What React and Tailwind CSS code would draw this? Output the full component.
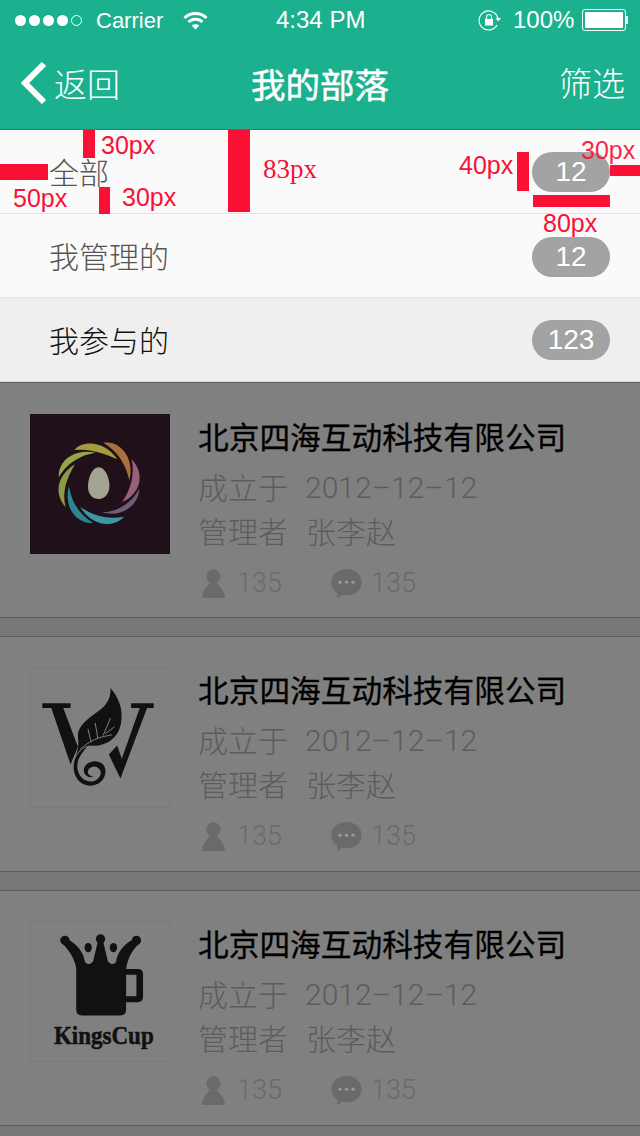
const cjk = { fontFamily: '"Noto Sans CJK SC", sans-serif' };

function StatusBar() {
  return (
    <div className="flex h-10 items-center text-[22px] text-white font-['Liberation_Sans',sans-serif]">
      <div className="ml-[15px] flex gap-[3px]">
        <div className="h-[11px] w-[11px] rounded-full bg-white" />
        <div className="h-[11px] w-[11px] rounded-full bg-white" />
        <div className="h-[11px] w-[11px] rounded-full bg-white" />
        <div className="h-[11px] w-[11px] rounded-full bg-white" />
        <div className="h-[11px] w-[11px] rounded-full border border-white" />
      </div>
      <span className="ml-[14px] w-[67px]">Carrier</span>
      <svg className="ml-5" width="25" height="19" viewBox="0 0 25 19" fill="none" stroke="#fff" strokeWidth="3">
        <path d="M1.5 7 C7.5 1 17.5 1 23.5 7" />
        <path d="M5.5 11 C9.5 7.3 15.5 7.3 19.5 11" />
        <path d="M12.5 18.5 L8.8 14.4 C10.8 12.7 14.2 12.7 16.2 14.4 Z" fill="#fff" stroke="none" />
      </svg>
      <span className="ml-[68px] w-[90px] whitespace-nowrap text-2xl">4:34 PM</span>
      <svg className="ml-[112px]" width="23" height="23" viewBox="0 0 23 23" fill="none" stroke="#fff" strokeWidth="1.2">
        <path d="M19 16 A9.5 9.5 0 1 1 19.8 9" />
        <path d="M17.5 9 L23 9 L20 12.5 Z" fill="#fff" stroke="none" />
        <rect x="7" y="10" width="8" height="6.5" fill="#fff" stroke="none" />
        <path d="M8.5 10 V8 A2.5 2.5 0 0 1 13.5 8 V10" />
      </svg>
      <span className="ml-3 w-[62px] text-2xl">100%</span>
      <div className="ml-[7px] flex items-center">
        <div className="h-[22px] w-11 rounded-[3px] border border-white p-0.5">
          <div className="h-full w-full rounded-[1px] bg-white" />
        </div>
        <div className="h-2 w-0.5 bg-white" />
      </div>
    </div>
  );
}

function NavBar() {
  return (
    <div className="flex h-[89px] items-center justify-between pb-[3px] text-white" style={cjk}>
      <div className="flex w-[130px] items-center">
        <svg className="ml-5" width="27" height="42" viewBox="0 0 27 42" fill="none" stroke="#fff" strokeWidth="6">
          <polyline points="24,2 5,21 24,40" />
        </svg>
        <span className="ml-[7px] text-[33px] font-light leading-none">返回</span>
      </div>
      <span className="text-[34.5px] font-normal leading-none [-webkit-text-stroke:0.5px_#fff]">我的部落</span>
      <div className="w-[130px] pr-[15px] text-right">
        <span className="text-[33px] font-light leading-none">筛选</span>
      </div>
    </div>
  );
}

function MenuRow({ label, count, active, nudge }) {
  return (
    <div className={`flex h-[84px] items-center justify-between border-b pl-[49px] pr-[30px] ${active ? 'border-[#dcdcdc] bg-[#efefef]' : 'border-[#e4e4e4] bg-[#fafafa]'}`}>
      <span className={`mb-[2px] text-[30px] font-light leading-none ${active ? 'text-[#111]' : 'text-[#555]'}`} style={cjk}>{label}</span>
      <span className={`flex h-10 w-[78px] items-center justify-center rounded-[20px] bg-[#a3a3a3] text-[28px] text-white font-['Liberation_Sans',sans-serif] ${nudge ? 'mt-[2px]' : ''}`}>{count}</span>
    </div>
  );
}

// red spec marks drawn on top of the design
function Annotations() {
  const label = "absolute text-[25px] leading-none text-[#f91034] font-['Liberation_Sans',sans-serif]";
  return (
    <>
      <div className="absolute left-0 top-[34px] h-4 w-12 bg-[#f91034]" />
      <div className={`${label} left-[13px] top-[56px]`}>50px</div>
      <div className="absolute left-[83px] top-0 h-7 w-3 bg-[#f91034]" />
      <div className={`${label} left-[101px] top-[3px]`}>30px</div>
      <div className="absolute left-[99px] top-[57px] h-[27px] w-[11px] bg-[#f91034]" />
      <div className={`${label} left-[122px] top-[55px]`}>30px</div>
      <div className="absolute left-[228px] top-0 h-[82px] w-[22px] bg-[#f91034]" />
      <div className="absolute left-[263px] top-[26px] text-[27px] leading-none text-[#f91034] font-['Liberation_Serif',serif]">83px</div>
      <div className={`${label} left-[459px] top-[23px]`}>40px</div>
      <div className="absolute left-[517px] top-[22px] h-[39px] w-3 bg-[#f91034]" />
      <div className={`${label} left-[581px] top-[8px] opacity-90`}>30px</div>
      <div className="absolute left-[610px] top-[35px] h-[11px] w-[30px] bg-[#f91034]" />
      <div className="absolute left-[533px] top-[65px] h-3 w-[77px] bg-[#f91034]" />
      <div className={`${label} left-[543px] top-[81px]`}>80px</div>
    </>
  );
}

function RingLogo() {
  return (
    <svg width="140" height="140" viewBox="30 27 420 420" className="block">
      <rect x="30" y="27" width="420" height="420" fill="#1f1019" />
      <path d="M163 135 C185 105 255 105 292 163 C260 148 215 130 163 135 Z" fill="#a49a3e" />
      <path d="M250 113 C305 105 345 165 328 226 C318 180 295 140 250 113 Z" fill="#a9703f" />
      <path d="M335 163 C375 205 365 265 306 292 C332 255 345 210 335 163 Z" fill="#99607a" />
      <path d="M358 250 C358 300 305 340 246 322 C295 320 335 295 358 250 Z" fill="#6e5c78" />
      <path d="M312 335 C280 370 215 365 180 305 C215 330 260 345 312 335 Z" fill="#3a98a6" />
      <path d="M220 354 C165 358 130 300 147 243 C155 295 180 330 220 354 Z" fill="#2f8491" />
      <path d="M137 307 C100 265 112 210 165 178 C140 220 125 260 137 307 Z" fill="#8b9a45" />
      <path d="M116 217 C115 160 170 130 227 143 C180 150 140 175 116 217 Z" fill="#97a24a" />
      <path d="M236 187 C258 187 270 225 268 248 C266 270 250 282 236 282 C218 282 204 268 204 245 C204 220 216 187 236 187 Z" fill="#a3a392" />
    </svg>
  );
}

function LeafLogo() {
  return (
    <svg width="141" height="141" viewBox="28 22 424 424" className="block">
      <rect x="28.5" y="22.5" width="423" height="423" fill="#808080" stroke="#777777" strokeWidth="3" />
      <path d="M65 131 H150 V145 H128 L172 262 L150 315 L92 145 H65 Z" fill="#111" />
      <path d="M332 131 H400 V145 H380 L300 357 L265 285 L290 258 L304 298 L358 145 H332 Z" fill="#111" />
      <path d="M270 85 C295 115 310 150 301 195 C292 240 250 265 205 258 C190 262 175 272 165 288 C178 262 172 240 172 222 C178 190 215 170 240 150 C262 132 272 110 270 85 Z" fill="#111" />
      <path d="M178 270 C205 245 235 232 275 226 M212 248 L202 208 M232 236 L224 190 M248 228 L270 175 M255 222 L282 202" fill="none" stroke="#808080" strokeWidth="3" />
      <path d="M200 262 C165 275 150 315 165 350 C185 395 255 385 255 335 C255 305 215 295 195 318 C180 338 200 362 220 350 C205 352 195 338 208 326 C225 312 245 330 240 345 C230 375 185 375 172 335 C165 305 180 285 200 262 Z" fill="#111" />
    </svg>
  );
}

function CupLogo() {
  return (
    <svg width="141" height="141" viewBox="28 28 424 424" className="block">
      <rect x="28.5" y="28.5" width="423" height="423" fill="#808080" stroke="#777777" strokeWidth="3" />
      <circle cx="133" cy="86" r="14" fill="#111" />
      <circle cx="240" cy="82" r="14" fill="#111" />
      <circle cx="348" cy="86" r="14" fill="#111" />
      <ellipse cx="203" cy="108" rx="11" ry="14" fill="#111" />
      <ellipse cx="279" cy="108" rx="11" ry="14" fill="#111" />
      <path d="M124 95 L145 85 C170 98 190 125 193 150 C196 160 212 160 218 148 L232 90 H248 L262 148 C268 160 284 160 287 150 C290 125 310 98 335 85 L358 95 C335 115 322 140 317 172 H352 Q368 172 368 188 V255 Q368 272 352 272 H317 V295 Q317 312 300 312 H184 Q167 312 167 295 V170 C162 140 145 115 124 95 Z M317 190 V254 H348 V190 Z" fill="#111" fillRule="evenodd" />
      <text x="250" y="397" textAnchor="middle" fontSize="76" fontWeight="700" fontFamily="'Liberation Serif', serif" fill="#111" stroke="#111" strokeWidth="1.5" textLength="300" lengthAdjust="spacingAndGlyphs">KingsCup</text>
    </svg>
  );
}

function PersonIcon() {
  return (
    <svg width="23" height="29" viewBox="38 40 68 86">
      <circle cx="72" cy="62" r="21" fill="#6a6a6a" />
      <path d="M38 126 C38 105 52 95 60 82 H84 C92 95 106 105 106 126 Z" fill="#6a6a6a" />
    </svg>
  );
}

function ChatIcon() {
  return (
    <svg width="31" height="29" viewBox="425 38 92 88">
      <path d="M471 38 C497 38 517 55 517 78 C517 101 497 118 471 118 C465 118 460 117 456 116 C452 120 447 124 441 126 C443 120 444 114 443 110 C432 103 425 92 425 78 C425 55 445 38 471 38 Z" fill="#6a6a6a" />
      <circle cx="451" cy="78" r="5" fill="#999" />
      <circle cx="471" cy="78" r="5" fill="#999" />
      <circle cx="491" cy="78" r="5" fill="#999" />
    </svg>
  );
}

function Card({ logo, first }) {
  return (
    <div className={`flex h-[235px] border-b border-[#5e5e5e] bg-[#808080] pl-[30px] ${first ? 'pt-[31px]' : 'pt-[30px]'}`}>
      <div className="h-[141px] w-[141px] shrink-0">{logo}</div>
      <div className="ml-[27px] flex flex-col" style={cjk}>
        <div className="flex h-[44px] items-center text-[30.7px] font-normal leading-none whitespace-nowrap text-black [-webkit-text-stroke:0.3px_#000]">北京四海互动科技有限公司</div>
        <div className="mt-[6px] flex h-[44px] items-center text-[30px] font-light leading-none text-[#5c5c5c]">
          <span>成立于</span>
          <span className="ml-[17px] mt-[3px] font-['Roboto',sans-serif]">2012–12–12</span>
        </div>
        <div className="flex h-[43px] items-center text-[30px] font-light leading-none text-[#5c5c5c]">
          <span>管理者</span>
          <span className="ml-[18px]">张李赵</span>
        </div>
        <div className="mt-[18px] flex items-center pl-[4px] text-[27px] font-light leading-none text-[#6a6a6a] font-['Roboto',sans-serif]">
          <PersonIcon />
          <span className="ml-[12px] w-[94px]">135</span>
          <ChatIcon />
          <span className="ml-[9px]">135</span>
        </div>
      </div>
    </div>
  );
}

function Strip() {
  return <div className="h-[19px] border-b border-[#5e5e5e] bg-[#777879]" />;
}

export default function App() {
  return (
    <div className="h-[1136px] w-[640px] overflow-hidden bg-[#808080]">
      <div className="border-b border-[#148a6e] bg-[#1cb18e]">
        <StatusBar />
        <NavBar />
      </div>
      <div className="relative border-b border-[#5e5e5e]">
        <MenuRow label="全部" count="12" />
        <MenuRow label="我管理的" count="12" nudge />
        <MenuRow label="我参与的" count="123" active />
        <Annotations />
      </div>
      <Card logo={<RingLogo />} first />
      <Strip />
      <Card logo={<LeafLogo />} />
      <Strip />
      <Card logo={<CupLogo />} />
      <Strip />
    </div>
  );
}
